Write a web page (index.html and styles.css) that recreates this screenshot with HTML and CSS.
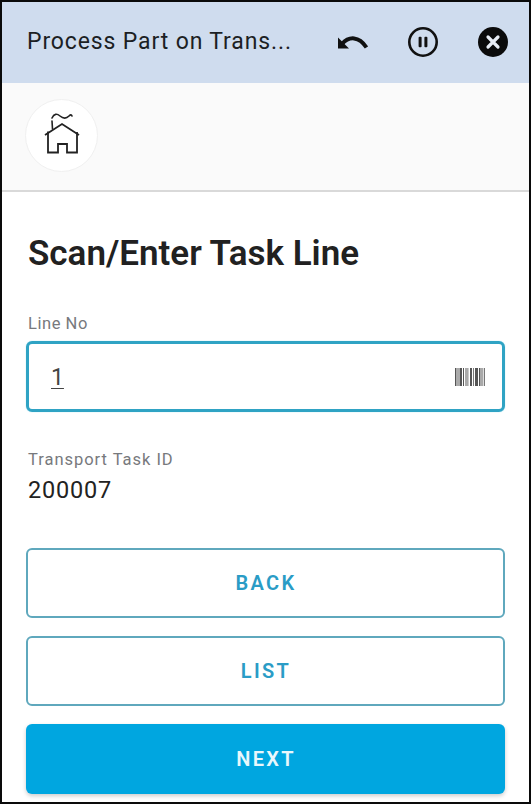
FILE: index.html
```html
<!DOCTYPE html>
<html lang="en">
<head>
<meta charset="utf-8">
<title>Process Part on Transport Task</title>
<link rel="stylesheet" href="styles.css">
</head>
<body>
<div class="frame">
  <header class="topbar">
    <div class="title">Process Part on Trans...</div>
    <div class="actions">
      <svg class="icon undo" viewBox="338 33 30 16" aria-hidden="true">
        <path d="M338 36.500 V47.500 H349 Z" fill="#111"/>
        <path d="M342 43 C349 35 359 35 366.500 46.500" fill="none" stroke="#111" stroke-width="4"/>
      </svg>
      <svg class="icon pause" viewBox="0 0 30 30" aria-hidden="true">
        <circle cx="15" cy="15" r="13.700" fill="none" stroke="#111" stroke-width="2.600"/>
        <rect x="10.600" y="9.800" width="3" height="10.400" rx="1" fill="#111"/>
        <rect x="16.400" y="9.800" width="3" height="10.400" rx="1" fill="#111"/>
      </svg>
      <svg class="icon close" viewBox="0 0 30 30" aria-hidden="true">
        <circle cx="15" cy="15" r="15" fill="#0b0b0b"/>
        <path d="M10 10 L20 20 M20 10 L10 20" stroke="#e8edf5" stroke-width="3.200" stroke-linecap="round"/>
      </svg>
    </div>
  </header>
  <div class="subbar">
    <div class="home">
      <svg class="home-icon" viewBox="44 112 36 42" aria-hidden="true">
        <path d="M52.500 129 L52 121 M52 118 C54 113.500 57 113.500 60 116 C63 118.500 66.500 118.500 69 116 C70.500 114.500 71.500 114.500 72 116" fill="none" stroke="#222" stroke-width="1.600" stroke-linecap="round"/>
        <path d="M45 135 L62 124 L79 135" fill="none" stroke="#222" stroke-width="1.800"/>
        <path d="M48 131.500 V152.500 H58 V144 H67 V152.500 H77 V132" fill="none" stroke="#222" stroke-width="1.800"/>
      </svg>
    </div>
  </div>
  <main class="content">
    <h1 class="heading">Scan/Enter Task Line</h1>
    <label class="label line-label" for="line">Line No</label>
    <div class="input">
      <span class="value" id="line">1</span>
      <svg class="barcode" viewBox="0 0 30 18" aria-hidden="true">
        <path d="M0 0h1.500v18H0zM2.500 0h1v18h-1zM4.500 0h2.500v18H4.500zM8 0h1v18H8zM10.500 0h1v18h-1zM12.500 0h.8v18h-.8zM15 0h2v18h-2zM18 0h.8v18H18zM20 0h3v18h-3zM24 0h1.500v18H24zM26.500 0h1v18h-1zM28.800 0h1v18h-1z" fill="#555"/>
      </svg>
    </div>
    <div class="label info-label">Transport Task ID</div>
    <div class="info-value">200007</div>
    <div class="buttons">
      <button class="btn outline" type="button">BACK</button>
      <button class="btn outline" type="button">LIST</button>
      <button class="btn primary" type="button">NEXT</button>
    </div>
  </main>
</div>
</body>
</html>
```
FILE: styles.css
```css
* { box-sizing: border-box; }
html, body { margin: 0; padding: 0; background: #fff; }
body { font-family: Roboto, "Noto Sans", sans-serif; }

.frame {
  width: 531px;
  height: 804px;
  border: 2px solid #0a0a0a;
  overflow: hidden;
  background: #fff;
  display: flex;
  flex-direction: column;
}

.topbar {
  height: 81px;
  flex: none;
  background: #cfdcee;
  display: flex;
  align-items: center;
  justify-content: space-between;
  padding: 0 21px 2px 25px;
}
.title {
  font-size: 23px;
  letter-spacing: 0.87px;
  color: #1c1f24;
  white-space: nowrap;
}
.actions { display: flex; align-items: center; gap: 40px; }
.icon { display: block; width: 30px; height: 30px; }
.undo { height: 16px; }

.subbar {
  height: 109px;
  flex: none;
  background: #fafafa;
  border-bottom: 2px solid #d9d9d9;
  padding: 16px 0 0 23px;
}
.home {
  width: 73px;
  height: 73px;
  border-radius: 50%;
  background: #fff;
  border: 1px solid #f0f0f0;
  display: flex;
  align-items: center;
  justify-content: center;
}
.home-icon { width: 36px; height: 42px; display: block; margin: 0 0 5px 1px; }

.content {
  flex: 1;
  padding: 0 24px;
  display: flex;
  flex-direction: column;
}
.heading {
  margin: 42px 0 0;
  font-size: 35px;
  line-height: 40px;
  font-weight: 600;
  color: #212121;
  padding-left: 2px;
}
.label {
  font-size: 16.500px;
  line-height: 18px;
  letter-spacing: 0.55px;
  color: #77797d;
  padding-left: 2px;
}
.line-label { margin-top: 41px; }
.input {
  margin-top: 8px;
  height: 71px;
  border: 3px solid #2fa3c4;
  border-radius: 6px;
  box-shadow: 0 0 1px 0 #6fd3ea;
  display: flex;
  align-items: center;
  justify-content: space-between;
  padding: 1px 17px 0 22px;
}
.value {
  font-size: 23px;
  color: #444;
  text-decoration: underline;
  text-underline-offset: 3px;
  text-decoration-thickness: 1px;
}
.barcode { width: 30px; height: 18px; display: block; }
.info-label { margin-top: 39px; letter-spacing: 0.97px; }
.info-value {
  margin-top: 6px;
  padding-left: 2px;
  font-size: 23.500px;
  line-height: 30px;
  letter-spacing: 0.8px;
  color: #222;
}
.buttons {
  margin-top: 43px;
  display: flex;
  flex-direction: column;
  gap: 18px;
}
.btn {
  height: 70px;
  border-radius: 6px;
  font-family: inherit;
  font-size: 20px;
  font-weight: 600;
  letter-spacing: 2.300px;
  padding: 0 0 0 1px;
}
.outline {
  background: #fff;
  border: 2px solid #5fa8bd;
  color: #2a9cc6;
}
.primary {
  background: #00a6e0;
  border: none;
  color: #e9f7fc;
  box-shadow: 0 2px 4px rgba(0,0,0,.2);
}
```
